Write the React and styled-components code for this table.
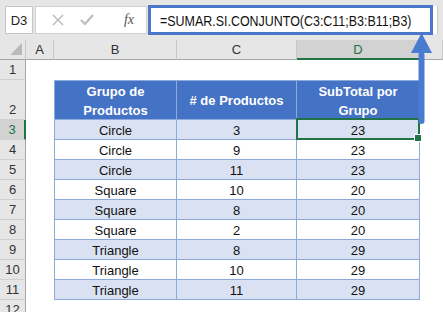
import React from 'react'
import styled, {createGlobalStyle, css} from 'styled-components'

const GlobalStyle = createGlobalStyle`
  html, body {
    margin: 0;
    padding: 0;
    background: #fff;
  }
  body {
    font-family: "Liberation Sans", Arial, sans-serif;
    width: 443px;
    height: 312px;
    overflow: hidden;
  }
`

const green = '#217346'
const blue = '#4472C4'
const band = '#D9E1F2'
const line = '#8EA9DB'

const Page = styled.div`
  position: relative;
  width: 443px;
  height: 312px;
  overflow: hidden;
`

const Toolbar = styled.div`
  display: flex;
  align-items: center;
  height: 40px;
  padding: 0 5px;
  box-sizing: border-box;
  background: #e6e6e6;
  gap: 2px;
`

const NameBox = styled.div`
  width: 28px;
  height: 28px;
  box-sizing: border-box;
  background: #fff;
  border: 1px solid #c6c6c6;
  display: flex;
  align-items: center;
  justify-content: center;
  font-size: 13px;
  color: #222;
`

const IconBox = styled.div`
  width: 112px;
  height: 28px;
  box-sizing: border-box;
  background: #fff;
  border: 1px solid #d0d0d0;
  display: flex;
  align-items: center;
  justify-content: space-around;
  padding: 0 4px 0 8px;
  color: #bcbcbc;
`

const Fx = styled.span`
  font-family: "Liberation Serif", "Times New Roman", serif;
  font-style: italic;
  font-size: 14px;
  color: #555;
  margin-left: 14px;
`

const FormulaField = styled.div`
  flex: 1;
  height: 28px;
  display: flex;
  align-items: center;
  background: #fff;
  border-right: 1px solid #c6c6c6;
`

const Highlight = styled.div`
  width: 285px;
  height: 30px;
  margin-left: -1px;
  box-sizing: border-box;
  border: 3px solid #4a77c9;
  display: flex;
  align-items: center;
  padding-left: 9px;
  overflow: hidden;
`

const FormulaText = styled.span`
  display: inline-block;
  font-size: 15px;
  color: #111;
  white-space: nowrap;
  transform: scaleX(0.83);
  transform-origin: left center;
`

const Sheet = styled.div`
  display: grid;
  grid-template-columns: 26px 28px 123px 120px 123px 1fr;
  grid-template-rows: 20px 20px 40px repeat(9, 20px) 20px;
`

const HeadCell = styled.div`
  background: ${p => (p.$active ? '#d2d2d2' : '#e6e6e6')};
  box-sizing: border-box;
  font-size: 13px;
  color: ${p => (p.$active ? green : '#333')};
  display: flex;
  justify-content: center;
`

const ColHead = styled(HeadCell)`
  align-items: center;
  border-right: 1px solid #c8c8c8;
  border-bottom: ${p => (p.$active ? `2px solid ${green}` : '1px solid #a6a6a6')};
  ${p => p.$active && css`padding-top: 1px;`}
`

const Corner = styled(HeadCell)`
  position: relative;
  border-right: 1px solid #c8c8c8;
  border-bottom: 1px solid #a6a6a6;
`

const Triangle = styled.svg`
  position: absolute;
  left: 9px;
  top: 2px;
`

const RowHead = styled(HeadCell)`
  align-items: flex-end;
  padding-bottom: 2px;
  border-bottom: 1px solid #d0d0d0;
  border-right: ${p => (p.$active ? `2px solid ${green}` : '1px solid #a6a6a6')};
`

const Blank = styled.div`
  background: #fff;
`

const Cell = styled.div`
  box-sizing: border-box;
  font-size: 13px;
  color: #111;
  display: flex;
  align-items: center;
  justify-content: center;
  text-align: center;
  padding-top: 2px;
  background: ${p => (p.$band ? band : '#fff')};
  border-bottom: 1px solid ${line};
  border-right: 1px solid ${line};
  ${p => p.$first && css`border-left: 1px solid ${line};`}
  ${p => p.$head && css`
    background: ${blue};
    color: #fff;
    font-weight: bold;
    line-height: 19px;
    padding-top: 1px;
    border-top: 1px solid ${line};
  `}
  ${p => p.$selected && css`
    position: relative;
  `}
`

const Selection = styled.div`
  position: absolute;
  left: -1px;
  top: -2px;
  right: -1px;
  bottom: -1px;
  border: 2px solid ${green};
  pointer-events: none;
`

const Handle = styled.div`
  position: absolute;
  right: -4px;
  bottom: -4px;
  width: 6px;
  height: 6px;
  background: ${green};
  border: 1px solid #fff;
`

const Arrow = styled.svg`
  position: absolute;
  left: 409px;
  top: 32px;
`

const rows = [
  ['Circle', 3, 23],
  ['Circle', 9, 23],
  ['Circle', 11, 23],
  ['Square', 10, 20],
  ['Square', 8, 20],
  ['Square', 2, 20],
  ['Triangle', 8, 29],
  ['Triangle', 10, 29],
  ['Triangle', 11, 29],
]

const X = () => (
  <svg width="12" height="12" viewBox="0 0 12 12">
    <path d="M1 1 L11 11 M11 1 L1 11" stroke="#bdbdbd" strokeWidth="1.5" fill="none" />
  </svg>
)

const Check = () => (
  <svg width="14" height="12" viewBox="0 0 14 12">
    <path d="M1 6 L5 10 L13 1" stroke="#bdbdbd" strokeWidth="2.2" fill="none" />
  </svg>
)

export default function App() {
  return (
    <Page>
      <GlobalStyle />
      <Toolbar>
        <NameBox>D3</NameBox>
        <IconBox>
          <X />
          <Check />
          <Fx>fx</Fx>
        </IconBox>
        <FormulaField>
          <Highlight>
            <FormulaText>=SUMAR.SI.CONJUNTO(C3:C11;B3:B11;B3)</FormulaText>
          </Highlight>
        </FormulaField>
      </Toolbar>

      <Sheet>
        <Corner>
          <Triangle width="14" height="14" viewBox="0 0 14 14">
            <polygon points="1,13 13,1 13,13" fill="#b9b9b9" />
          </Triangle>
        </Corner>
        <ColHead>A</ColHead>
        <ColHead>B</ColHead>
        <ColHead>C</ColHead>
        <ColHead $active>D</ColHead>
        <ColHead />

        <RowHead>1</RowHead>
        <Blank /><Blank /><Blank /><Blank /><Blank />

        <RowHead>2</RowHead>
        <Blank />
        <Cell $head $first>Grupo de<br />Productos</Cell>
        <Cell $head># de Productos</Cell>
        <Cell $head>SubTotal por<br />Grupo</Cell>
        <Blank />

        {rows.map(([g, n, s], i) => (
          <React.Fragment key={i}>
            <RowHead $active={i === 0}>{i + 3}</RowHead>
            <Blank />
            <Cell $first $band={i % 2 === 0}>{g}</Cell>
            <Cell $band={i % 2 === 0}>{n}</Cell>
            <Cell $band={i % 2 === 0} $selected={i === 0}>
              {s}
              {i === 0 && (
                <Selection>
                  <Handle />
                </Selection>
              )}
            </Cell>
            <Blank />
          </React.Fragment>
        ))}

        <RowHead>12</RowHead>
        <Blank /><Blank /><Blank /><Blank /><Blank />
      </Sheet>

      <Arrow width="26" height="96" viewBox="0 0 26 96">
        <polygon points="12.5,1 23,21 2,21" fill="#4a7bd0" />
        <rect x="9.5" y="20" width="6" height="72" rx="3" fill="#4a7bd0" />
      </Arrow>
    </Page>
  )
}
